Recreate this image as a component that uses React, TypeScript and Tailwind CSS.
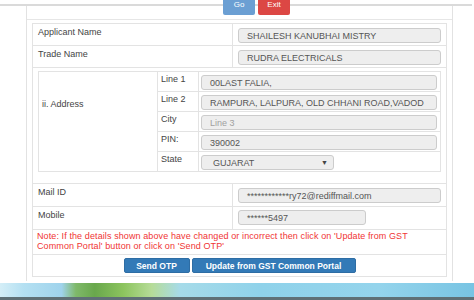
import React from "react";

function Field({ value, className = "", muted = false }: { value: string; className?: string; muted?: boolean }) {
  return (
    <div
      className={`h-[15px] bg-[#eeeeee] border border-[#cccccc] rounded-[3px] pl-[8px] flex items-center text-[9px] leading-[10px] whitespace-nowrap overflow-hidden ${
        muted ? "text-[#a0a0a0]" : "text-[#555555]"
      } ${className}`}
    >
      {value}
    </div>
  );
}

function Row({ label, children, h }: { label: string; children: React.ReactNode; h: string }) {
  return (
    <div className={`flex border-b border-[#e3e3e3] ${h}`}>
      <div className="w-[200px] border-r border-[#e3e3e3] pl-[5px] pt-[3px] text-[#444444]">{label}</div>
      <div className="flex-1 pl-[5px]">{children}</div>
    </div>
  );
}

function AddrRow({ label, children, last = false }: { label: string; children: React.ReactNode; last?: boolean }) {
  return (
    <div className={`flex ${last ? "h-[19px]" : "h-[20px] border-b border-[#e3e3e3]"}`}>
      <div className="w-[41px] border-r border-[#e3e3e3] pl-[3px] pt-[2px] text-[#444444]">{label}</div>
      <div className="flex-1 pl-[2px] pt-[2px]">{children}</div>
    </div>
  );
}

export default function App() {
  return (
    <div className="w-[474px] h-[300px] overflow-hidden bg-white text-[9px] leading-[10px] text-[#444444] font-['Liberation_Sans',Arial,sans-serif] flex flex-col">
      <div className="h-[4px] shrink-0" />
      <div className="h-[2px] w-[472px] bg-[#dadada] shrink-0" />
      <div className="ml-[26px] w-[427px] h-[275px] shrink-0 border-x border-[#e2e2e2] flex flex-col">
        <div className="h-[14px] shrink-0 border-b border-[#e6e6e6]">
          <div className="relative z-10 -mt-[6px] flex">
            <div className="ml-[196px] w-[32px] h-[15px] bg-[#6b9fd3] rounded-b-[2px] text-white text-[8px] leading-[8px] flex justify-center pt-[1px]">
              Go
            </div>
            <div className="ml-[3px] w-[32px] h-[15px] bg-[#dc4744] rounded-b-[2px] text-white text-[8px] leading-[8px] flex justify-center pt-[1px]">
              Exit
            </div>
          </div>
        </div>

        <div className="mt-[3px] ml-[5px] w-[415px] border border-[#e3e3e3] flex flex-col">
          <Row label="Applicant Name" h="h-[22px]">
            <Field value="SHAILESH KANUBHAI MISTRY" className="mt-[4px] w-[203px]" />
          </Row>
          <Row label="Trade Name" h="h-[22px]">
            <Field value="RUDRA ELECTRICALS" className="mt-[4px] w-[203px]" />
          </Row>

          <div className="h-[116px] border-b border-[#e3e3e3] pl-[5px] pt-[3px]">
            <div className="w-[403px] h-[101px] border border-[#e3e3e3] flex">
              <div className="w-[119px] border-r border-[#e3e3e3] pl-[3px] pt-[27px] text-[#444444]">ii. Address</div>
              <div className="flex-1 flex flex-col">
                <AddrRow label="Line 1">
                  <Field value="00LAST FALIA," className="mt-[1px] w-[236px] pl-[6px]" />
                </AddrRow>
                <AddrRow label="Line 2">
                  <Field value="RAMPURA, LALPURA, OLD CHHANI ROAD,VADOD" className="mt-[1px] w-[236px] pl-[6px]" />
                </AddrRow>
                <AddrRow label="City">
                  <Field value="Line 3" muted className="mt-[1px] w-[236px] pl-[6px]" />
                </AddrRow>
                <AddrRow label="PIN:">
                  <Field value="390002" className="mt-[1px] w-[236px] pl-[6px]" />
                </AddrRow>
                <AddrRow label="State" last>
                  <div className="mt-[1px] w-[133px] h-[15px] bg-[#eeeeee] border border-[#cccccc] rounded-[3px] pl-[11px] pr-[5px] flex items-center justify-between text-[#555555]">
                    <span>GUJARAT</span>
                    <span className="text-[7px] leading-[8px] text-[#444444]">▼</span>
                  </div>
                </AddrRow>
              </div>
            </div>
          </div>

          <Row label="Mail ID" h="h-[23px]">
            <Field value="************ry72@rediffmail.com" className="mt-[4px] w-[203px]" />
          </Row>
          <Row label="Mobile" h="h-[23px]">
            <Field value="******5497" className="mt-[3px] w-[128px]" />
          </Row>

          <div className="h-[25px] border-b border-[#e3e3e3] pl-[4px] pt-[2px] text-[#f03434] leading-[9.5px] tracking-[0.1px]">
            Note: If the details shown above have changed or incorrect then click on 'Update from GST
            <br />
            Common Portal' button or click on 'Send OTP'
          </div>

          <div className="h-[21px] flex justify-center gap-[2px] pt-[3px]">
            <div className="w-[66px] h-[15px] bg-[#337ab7] border border-[#2e6da4] rounded-[2px] text-white font-bold text-[8.5px] leading-[10px] flex items-center justify-center">
              Send OTP
            </div>
            <div className="w-[164px] h-[15px] bg-[#337ab7] border border-[#2e6da4] rounded-[2px] text-white font-bold text-[8.5px] leading-[10px] flex items-center justify-center">
              Update from GST Common Portal
            </div>
          </div>
        </div>
      </div>

      <div className="mt-[2px] h-[17px] shrink-0 flex flex-col">
        <div className="flex-1 bg-[linear-gradient(to_right,#d4eef7_0%,#b4e0f2_5%,#9fd3ec_13%,#7fb96a_16%,#69a84c_20%,#8cc45e_26%,#b6dc98_32%,#a6dbe9_38%,#8fd2ea_55%,#94d4ec_80%,#78c4e3_100%)]" />
        <div className="h-[3px] bg-[#5f7076]" />
      </div>
    </div>
  );
}
